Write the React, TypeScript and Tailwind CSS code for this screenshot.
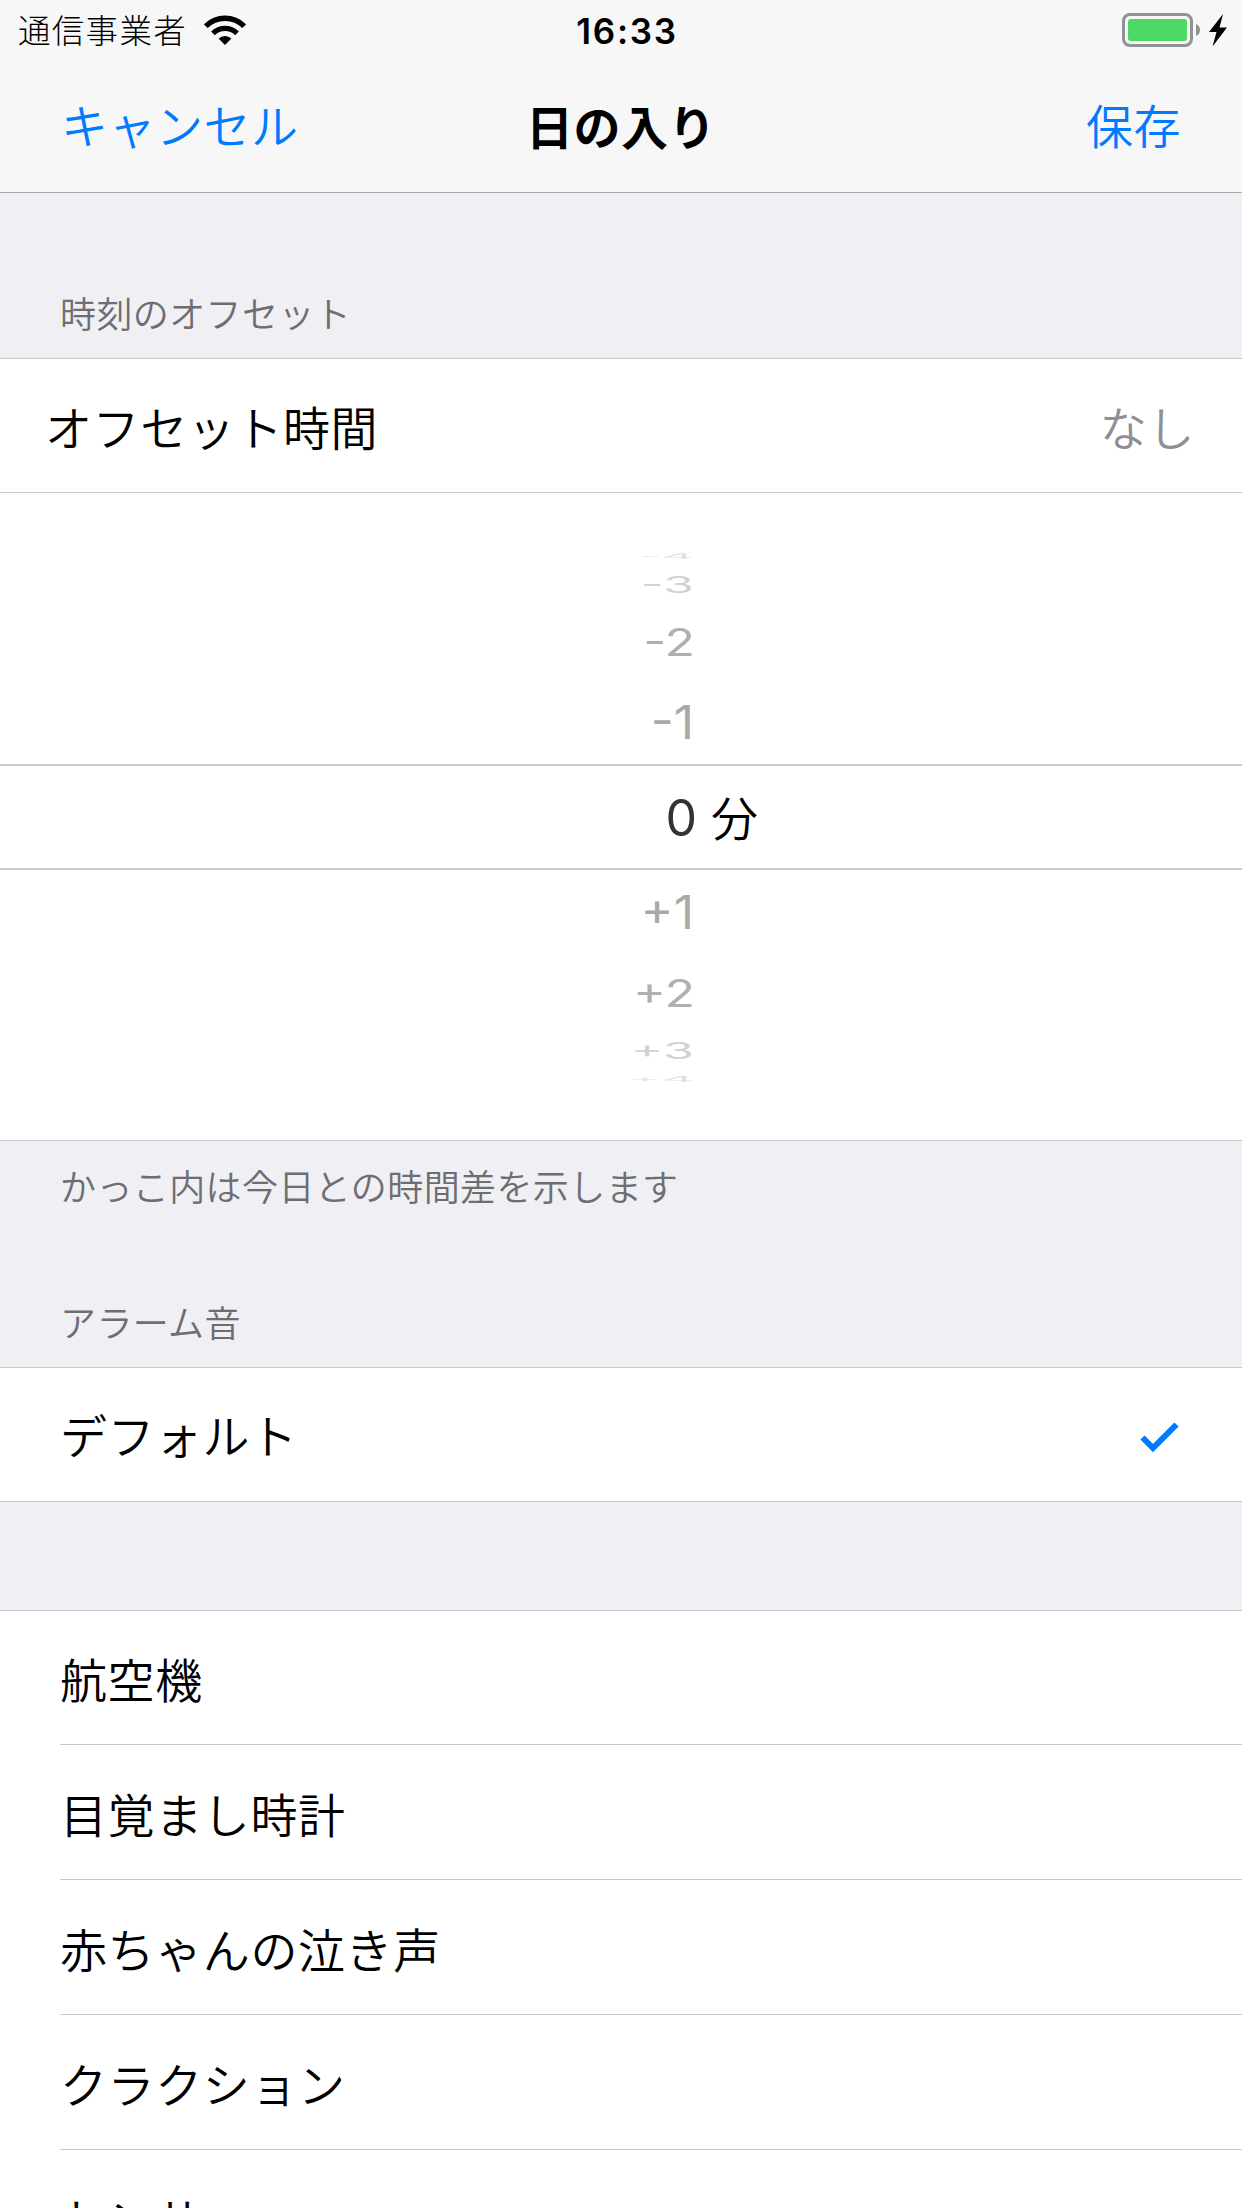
import { clsx } from "clsx";

const wheel = [
  { label: "-4", row: "h-[18px]", text: "w-[694px] scale-y-[0.14] text-[#e2e2e2]" },
  { label: "-3", row: "h-[39px]", text: "w-[694px] scale-y-[0.46] text-[#d2d2d2]" },
  { label: "-2", row: "h-[76px]", text: "w-[695px] scale-y-[0.76] text-[#b0b0b0]" },
  { label: "-1", row: "h-[84px]", text: "w-[694px] scale-y-[0.92] text-[#a9a9a9]" },
  { label: "0", row: "h-[106px] border-y-2 border-[#cdcdcd] pt-[2px]", text: "w-[697px] text-[#333333]" },
  { label: "+1", row: "h-[84px]", text: "w-[694px] scale-y-[0.92] text-[#a9a9a9]" },
  { label: "+2", row: "h-[77px]", text: "w-[695px] scale-y-[0.76] text-[#b0b0b0]" },
  { label: "+3", row: "h-[39px]", text: "w-[694px] scale-y-[0.46] text-[#d2d2d2]" },
  { label: "+4", row: "h-[17px]", text: "w-[694px] scale-y-[0.14] text-[#e2e2e2]" },
];

const sounds = ["航空機", "目覚まし時計", "赤ちゃんの泣き声", "クラクション", "センサー"];

function WifiIcon() {
  return (
    <svg width="42" height="30" viewBox="0 0 42 30" fill="none" stroke="#000">
      <path d="M1.8 11.2 A27.2 27.2 0 0 1 40.2 11.2" strokeWidth="5.4" />
      <path d="M9 18.4 A17 17 0 0 1 33 18.4" strokeWidth="5.2" />
      <path d="M21 30 L14.6 23.6 A9 9 0 0 1 27.4 23.6 Z" fill="#000" stroke="none" />
    </svg>
  );
}

function BatteryIcon() {
  return (
    <svg width="106" height="34" viewBox="0 0 106 34">
      <rect x="1.5" y="1.5" width="68" height="31" rx="6.5" fill="none" stroke="#929292" strokeWidth="3" />
      <rect x="6" y="6" width="59" height="22" rx="3" fill="#4cd964" />
      <path d="M74 11 Q78 12.5 78 17 Q78 21.5 74 23 Z" fill="#929292" />
      <path d="M101 1 L87 19 H94.5 L90.5 33.5 L105 14.5 H97.5 Z" fill="#000" />
    </svg>
  );
}

function StatusBar() {
  return (
    <div className="grid h-[60px] grid-cols-3 items-center pr-[14px] pl-[18px]">
      <div className="flex items-center gap-[17px]">
        <span className="pt-[4px] text-[32.5px] leading-[56px] font-light tracking-[1.3px]">通信事業者</span>
        <WifiIcon />
      </div>
      <span className="pt-[3px] pl-[8px] text-center text-[35px] font-semibold tracking-[1.7px]">16:33</span>
      <div className="flex justify-end">
        <BatteryIcon />
      </div>
    </div>
  );
}

function NavBar() {
  return (
    <div className="grid h-[132px] grid-cols-3 items-center px-[61px] text-[47px] leading-[132px] tracking-[0.5px]">
      <button className="text-left font-[350] text-[#007aff]">キャンセル</button>
      <h1 className="pt-[2px] text-center font-bold">日の入り</h1>
      <button className="text-right font-[350] text-[#007aff]">保存</button>
    </div>
  );
}

function Wheel() {
  return (
    <div className="flex h-[647px] flex-col justify-center pt-[1px]">
      {wheel.map((item) => (
        <div key={item.label} className={clsx("flex shrink-0 items-center", item.row)}>
          <span className={clsx("text-right text-[50px] leading-none", item.text)}>
            {item.label}
          </span>
          {item.label === "0" && <span className="pl-[14px] text-[47px] leading-none font-[350]">分</span>}
        </div>
      ))}
    </div>
  );
}

export default function App() {
  return (
    <div className="h-[2208px] w-[1242px] overflow-hidden bg-[#efeff4] font-[Inter,'Noto_Sans_CJK_JP',sans-serif] text-black">
      <header className="h-[193px] border-b border-[#a9a9ac] bg-[#f7f7f7]">
        <StatusBar />
        <NavBar />
      </header>

      <h2 className="flex h-[165px] items-end pb-[17px] pl-[60px] text-[36px] leading-[52px] font-[350] tracking-[0.4px] text-[#6d6d72]">
        時刻のオフセット
      </h2>
      <section className="border-y border-[#c8c7cc] bg-white">
        <div className="flex h-[134px] items-center justify-between border-b border-[#c8c7cc] pt-[7px] pr-[47px] pl-[45px] text-[47px] font-[350] tracking-[0.6px]">
          <span>オフセット時間</span>
          <span className="text-[#8e8e93]">なし</span>
        </div>
        <Wheel />
      </section>
      <p className="h-[139px] pt-[21px] pl-[60px] text-[36px] leading-[52px] font-[350] tracking-[0.4px] text-[#6d6d72]">
        かっこ内は今日との時間差を示します
      </p>

      <h2 className="flex h-[87px] items-end pb-[17px] pl-[60px] text-[36px] leading-[52px] font-[350] tracking-[0.4px] text-[#6d6d72]">
        アラーム音
      </h2>
      <section className="flex h-[135px] items-center justify-between border-y border-[#c8c7cc] bg-white pt-[5px] pr-[63px] pl-[60px] text-[47px] font-[350] tracking-[0.5px]">
        <span>デフォルト</span>
        <svg width="39" height="31" viewBox="0 0 39 31" fill="none" stroke="#007aff" strokeWidth="6">
          <path d="M2.5 15.5 L13 26 L36.5 2.5" />
        </svg>
      </section>

      <section className="mt-[108px] border-t border-[#c8c7cc] bg-white pl-[60px] text-[47px] font-[350] tracking-[0.6px]">
        {sounds.map((sound) => (
          <div key={sound} className="flex h-[135px] items-center border-b border-[#c8c7cc] pt-[8px] first:h-[134px]">
            {sound}
          </div>
        ))}
      </section>
    </div>
  );
}
